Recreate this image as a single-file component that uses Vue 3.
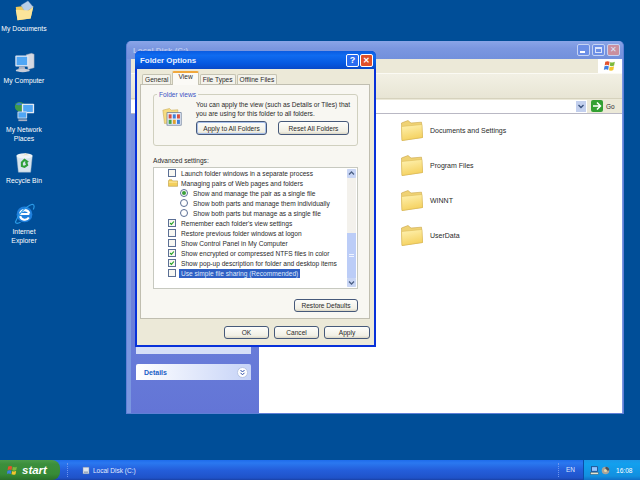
<template>
  <div class="desktop">
    <div v-for="icon in desktopIcons" :key="icon.label" class="desk-icon" :style="{ top: icon.top + 'px' }">
      <svg class="desk-glyph" viewBox="0 0 24 24" v-html="icon.svg"></svg>
      <span>{{ icon.label }}</span>
    </div>

    <!-- explorer window behind the dialog -->
    <div class="explorer">
      <div class="ex-title">
        <span class="ex-title-text">Local Disk (C:)</span>
        <div class="ex-caps">
          <span class="ex-cap"><i class="cap-min"></i></span>
          <span class="ex-cap"><i class="cap-max"></i></span>
          <span class="ex-cap ex-cap-close">✕</span>
        </div>
      </div>
      <div class="ex-inner">
        <div class="ex-menu">
          <svg class="ex-flag" viewBox="0 0 14 14" v-html="flagSvg"></svg>
        </div>
        <div class="ex-toolbar"></div>
        <div class="ex-address">
          <div class="ex-addr-box"><span class="combo-arrow"><svg viewBox="0 0 10 11"><path d="M2.500 4 5 6.500 7.500 4" fill="none" stroke="#38507c" stroke-width="1.300"/></svg></span></div>
          <span class="go-btn"><svg viewBox="0 0 12 12"><path d="M2 6h7M6 2.500 9.500 6 6 9.500" fill="none" stroke="#fff" stroke-width="1.500"/></svg></span>
          <span class="go-text">Go</span>
        </div>
        <div class="ex-body">
          <div class="ex-side">
            <div class="side-box"></div>
            <div class="side-head">
              <span>Details</span>
              <span class="chev"><svg viewBox="0 0 9 9"><path d="M2.500 2 4.500 4l2-2M2.500 4.800l2 2 2-2" fill="none" stroke="#2a4ba8" stroke-width="1"/></svg></span>
            </div>
          </div>
          <div class="ex-files">
            <div v-for="name in folders" :key="name" class="file-row">
              <svg class="folder" viewBox="0 0 24 24">
                <defs>
                  <linearGradient id="folderFront" x1="0" y1="0" x2="0.300" y2="1">
                    <stop offset="0" stop-color="#fff3b4"/>
                    <stop offset="1" stop-color="#f5d261"/>
                  </linearGradient>
                </defs>
                <path d="M1.500 5 8 2.500l3 2.500 10.500-.8 1 15.300-20.500 3z" fill="#efd274" stroke="#c9a545" stroke-width=".6"/>
                <path d="M1.500 8.500 22 6.500l.5 13-20.500 3z" fill="url(#folderFront)" stroke="#d8b750" stroke-width=".5"/>
              </svg>
              <span>{{ name }}</span>
            </div>
          </div>
        </div>
      </div>
    </div>

    <!-- Folder Options dialog -->
    <div class="dialog">
      <div class="dlg-title">
        <span>Folder Options</span>
        <div class="dlg-caps">
          <span class="dlg-cap dlg-help">?</span>
          <span class="dlg-cap dlg-close">✕</span>
        </div>
      </div>
      <div class="dlg-body">
        <div class="tabs">
          <span v-for="t in tabs" :key="t" class="tab" :class="{ active: t === 'View' }">{{ t }}</span>
        </div>
        <div class="panel">
          <div class="group">
            <span class="legend">Folder views</span>
            <svg class="views-icon" viewBox="0 0 24 24">
              <path d="M1 5l8-2 2 2 8-.5V19L3 21z" fill="#f6dc80" stroke="#c2a24a" stroke-width=".6"/>
              <rect x="6" y="8" width="17" height="15" fill="#e8eef8" stroke="#5a6f90" stroke-width=".8"/>
              <rect x="8" y="10" width="3.500" height="5" fill="#d9503f"/><rect x="13" y="10" width="3.500" height="5" fill="#3f7fd9"/><rect x="18" y="10" width="3.500" height="5" fill="#d9503f"/>
              <rect x="8" y="16.500" width="3.500" height="5" fill="#47a447"/><rect x="13" y="16.500" width="3.500" height="5" fill="#e0a030"/><rect x="18" y="16.500" width="3.500" height="5" fill="#3f7fd9"/>
            </svg>
            <div class="group-main">
              <p>You can apply the view (such as Details or Tiles) that<br>you are using for this folder to all folders.</p>
              <div class="group-btns">
                <button class="btn btn-default wide">Apply to All Folders</button>
                <button class="btn wide">Reset All Folders</button>
              </div>
            </div>
          </div>

          <div class="adv-label">Advanced settings:</div>
          <div class="list">
            <div class="list-rows">
              <div v-for="row in rows" :key="row.text" class="row" :class="'row-' + row.type">
                <span v-if="row.type === 'check'" class="check">
                  <svg v-if="row.on" viewBox="0 0 8 8"><path d="M1.500 4 3.200 5.800 6.500 2" fill="none" stroke="#21a121" stroke-width="1.500"/></svg>
                </span>
                <span v-else-if="row.type === 'radio'" class="radio"><i v-if="row.on"></i></span>
                <svg v-else class="folder-mini" viewBox="0 0 12 9"><path d="M.5 2 1.500.6h3l1 1.400h6v6.500H.5z" fill="#f3cf5c" stroke="#a8882e" stroke-width=".6"/><path d="M1 3.400h10" stroke="#fff2b8" stroke-width="1"/></svg>
                <span class="row-text" :class="{ selected: row.selected }">{{ row.text }}</span>
              </div>
            </div>
            <div class="scroll">
              <span class="sb-btn"><svg viewBox="0 0 9 9"><path d="M2 5.500 4.500 3 7 5.500" fill="none" stroke="#4d6185" stroke-width="1.300"/></svg></span>
              <div class="sb-track"><div class="sb-thumb"><i></i></div></div>
              <span class="sb-btn"><svg viewBox="0 0 9 9"><path d="M2 3.500 4.500 6 7 3.500" fill="none" stroke="#4d6185" stroke-width="1.300"/></svg></span>
            </div>
          </div>
          <div class="restore-row">
            <button class="btn restore">Restore Defaults</button>
          </div>
        </div>
        <div class="dlg-actions">
          <button class="btn action">OK</button>
          <button class="btn action">Cancel</button>
          <button class="btn action">Apply</button>
        </div>
      </div>
    </div>

    <!-- taskbar -->
    <div class="taskbar">
      <div class="start">
        <svg class="start-flag" viewBox="0 0 14 14" v-html="flagSvg"></svg>
        <span>start</span>
      </div>
      <div class="task-grip"></div>
      <div class="task-item">
        <svg viewBox="0 0 12 12"><rect x="1.500" y="1" width="9" height="10" fill="#dfe6ee" stroke="#7f8ea8" stroke-width=".7"/><rect x="3" y="7.500" width="6" height="2" fill="#8fa0b8"/></svg>
        <span>Local Disk (C:)</span>
      </div>
      <div class="lang">EN</div>
      <div class="tray">
        <svg viewBox="0 0 12 12"><rect x="2" y="1" width="8" height="6" fill="#8fc4ff" stroke="#1a2f6a" stroke-width=".9"/><rect x="1" y="8.500" width="10" height="2.500" fill="#e8e4d0" stroke="#4a4a4a" stroke-width=".5"/></svg>
        <svg viewBox="0 0 12 12"><circle cx="6" cy="6" r="5" fill="#a9a49a"/><circle cx="6" cy="6" r="2" fill="#e7d9a8"/><path d="M6 1A5 5 0 0 1 11 6H8a2 2 0 0 0-2-2z" fill="#4a4f5a"/></svg>
        <span>16:08</span>
      </div>
    </div>
  </div>
</template>

<script setup>
const flagSvg = `
  <path d="M1.500 2c1.800-.9 3.500-.9 5 0L5.800 6.300c-1.600-.9-3.300-.9-5 0z" fill="#e4532d"/>
  <path d="M7.400 2.300c1.700.9 3.400.9 5.200-.2l-.8 4.300c-1.700 1-3.500 1-5.100.2z" fill="#7db93c"/>
  <path d="M.6 7.300c1.700-.9 3.400-.9 5 0l-.8 4.300c-1.600-.9-3.300-.9-5 0z" fill="#3f7ee0"/>
  <path d="M6.600 7.600c1.700.9 3.400.9 5.100-.2l-.8 4.300c-1.700 1-3.500 1-5.100.2z" fill="#f5c52e"/>`

const computerSvg = `
  <path d="M14 3l6-1.500 3 1V18l-7 2z" fill="#d4d8e2" stroke="#8f97ab" stroke-width=".5"/>
  <rect x="1.500" y="4" width="15" height="12.500" rx="1" fill="#dfe6f2"/>
  <rect x="3" y="5.500" width="12" height="9.500" fill="#4fa6f5"/>
  <path d="M6 16.500h6l1 3H5z" fill="#aab2c4"/>
  <ellipse cx="10" cy="21" rx="8" ry="2" fill="#c7ccd8"/>`

const desktopIcons = [
  {
    label: 'My Documents',
    top: 0,
    svg: `<path d="M2 8l7-1 2 2 11-2-3 14L4 23z" fill="#eec95a"/>
      <path d="M8 6l8-5 6 7-9 6z" fill="#b9cfe8" stroke="#8fa9cc" stroke-width=".4"/>
      <path d="M2 11l15 1 5-4-3 13-15 2z" fill="#fbe59a"/>`,
  },
  { label: 'My Computer', top: 52, svg: computerSvg },
  {
    label: 'My Network Places',
    top: 101,
    svg: `<circle cx="6.500" cy="6.500" r="5.500" fill="#3f9a4b"/><path d="M2 4c3-3 6-2 8 0-3 1-6 1-8 0z" fill="#3b7fd9"/>
      <rect x="9" y="3" width="14" height="11" rx="1" fill="#e6eaf2"/><rect x="10.500" y="4.500" width="11" height="8" fill="#4fa6f5"/>
      <rect x="4" y="12" width="11" height="8" rx="1" fill="#dce1ea"/><rect x="5" y="13" width="9" height="6" fill="#4fa6f5"/>
      <path d="M5 21h10v2H5z" fill="#aab2c4"/>`,
  },
  {
    label: 'Recycle Bin',
    top: 152,
    svg: `<path d="M3 4h18l-2 19H5z" fill="#d6e4ee" stroke="#9fb5c8" stroke-width=".5"/>
      <ellipse cx="12" cy="4.500" rx="9" ry="3" fill="#eef4f8"/>
      <path d="M7 3l4 1 2-3 4 3" fill="#e7e2c8"/>
      <path d="M9 12l3-3 3 2-1 1 1 3-3 2-3-1z" fill="none" stroke="#2fa03a" stroke-width="2.400"/>`,
  },
  {
    label: 'Internet Explorer',
    top: 203,
    svg: `<circle cx="12" cy="13" r="9" fill="#1f7fdc"/>
      <path d="M6.500 12.500h11M7 12a5.500 5.500 0 0 1 10.500 0M7 15a5.500 5.500 0 0 0 10 1.500" fill="none" stroke="#fff" stroke-width="2.400"/>
      <path d="M1.500 22C4 14 13 4 21 1.500c3 0 2 4 1 6M1.500 22c1 2 4 1 6 0" fill="none" stroke="#2b9ce8" stroke-width="1.300"/>`,
  },
]

const folders = ['Documents and Settings', 'Program Files', 'WINNT', 'UserData']
const tabs = ['General', 'View', 'File Types', 'Offline Files']

const rows = [
  { type: 'check', text: 'Launch folder windows in a separate process' },
  { type: 'folder', text: 'Managing pairs of Web pages and folders' },
  { type: 'radio', on: true, text: 'Show and manage the pair as a single file' },
  { type: 'radio', text: 'Show both parts and manage them individually' },
  { type: 'radio', text: 'Show both parts but manage as a single file' },
  { type: 'check', on: true, text: "Remember each folder's view settings" },
  { type: 'check', text: 'Restore previous folder windows at logon' },
  { type: 'check', text: 'Show Control Panel in My Computer' },
  { type: 'check', on: true, text: 'Show encrypted or compressed NTFS files in color' },
  { type: 'check', on: true, text: 'Show pop-up description for folder and desktop items' },
  { type: 'check', selected: true, text: 'Use simple file sharing (Recommended)' },
]
</script>

<style>
html, body { margin: 0; padding: 0; overflow: hidden; }
</style>

<style scoped>
.desktop {
  position: relative;
  width: 640px;
  height: 480px;
  overflow: hidden;
  background: #004e98;
  font-family: "Liberation Sans", Arial, sans-serif;
  font-size: 6.6px;
  color: #2a2a2a;
}

.desk-icon {
  position: absolute;
  left: 0;
  width: 48px;
  display: flex;
  flex-direction: column;
  align-items: center;
  color: #fff;
  text-align: center;
  line-height: 8.5px;
  font-size: 6.8px;
}
.desk-glyph { width: 21px; height: 21px; margin-bottom: 4px; }

/* explorer */
.explorer {
  position: absolute;
  left: 126px;
  top: 41px;
  width: 498px;
  height: 373px;
  box-sizing: border-box;
  background: #7b97e0;
  border: 1px solid #5f7fd6;
  border-top: 0;
  border-radius: 5px 5px 0 0;
  display: flex;
  flex-direction: column;
}
.ex-title {
  height: 18px;
  display: flex;
  align-items: center;
  justify-content: space-between;
  padding: 0 3px 0 6px;
  background: linear-gradient(#8aa5e8, #7b97e0 40%, #7290dc);
  border-radius: 5px 5px 0 0;
}
.ex-title-text { color: #b9c8ef; font-weight: 700; font-size: 7.9px; }
.ex-caps { display: flex; gap: 2px; }
.ex-cap {
  width: 13px;
  height: 12px;
  box-sizing: border-box;
  border: 1px solid #c6d3f3;
  border-radius: 2px;
  background: #6c8fe6;
  color: #dbe4fa;
  font-size: 8px;
  line-height: 10px;
  text-align: center;
  position: relative;
}
.ex-cap-close { background: #c98f9f; }
.cap-min { position: absolute; left: 2px; bottom: 2px; width: 5px; height: 2px; background: #fff; }
.cap-max { position: absolute; left: 2px; top: 2px; width: 7px; height: 6px; box-sizing: border-box; border: 1px solid #dbe4fa; border-top-width: 2px; }
.ex-inner { flex: 1; margin: 0 1px 0 4px; display: flex; flex-direction: column; min-height: 0; }
.ex-menu {
  height: 14px;
  background: #ece9d8;
  border-bottom: 1px solid #fbfaf4;
  display: flex;
  justify-content: flex-end;
}
.ex-flag { width: 24px; height: 14px; background: #fff; padding: 1px 5px; box-sizing: border-box; }
.ex-toolbar { height: 24px; background: linear-gradient(#f2f0e4, #e8e5d4); border-bottom: 1px solid #d6d2bd; }
.ex-address {
  height: 14px;
  background: #ece9d8;
  display: flex;
  align-items: center;
  border-bottom: 1px solid #b9b8c4;
}
.ex-addr-box {
  flex: 1;
  height: 13px;
  background: #fff;
  display: flex;
  justify-content: flex-end;
  align-items: center;
  padding-right: 1px;
}
.combo-arrow { width: 10px; height: 11px; background: #c3d0ee; display: block; }
.combo-arrow svg { width: 10px; height: 11px; display: block; }
.go-btn { width: 12px; height: 12px; background: #32a032; border-radius: 2px; margin: 0 3px 0 4px; }
.go-btn svg { width: 12px; height: 12px; display: block; }
.go-text { width: 16px; font-size: 6.5px; color: #333; }
.ex-body { flex: 1; display: flex; min-height: 0; }
.ex-side {
  width: 128px;
  background: linear-gradient(#7a94e2, #6375d6);
  box-sizing: border-box;
  display: flex;
  flex-direction: column;
  justify-content: flex-end;
  padding: 0 0 33px 5px;
}
.side-box { height: 14px; margin-bottom: 10px; width: 115px; background: #d6dff7; }
.side-head {
  height: 16px;
  width: 115px;
  box-sizing: border-box;
  padding: 0 3px 0 8px;
  display: flex;
  align-items: center;
  justify-content: space-between;
  background: linear-gradient(90deg, #fff, #c6d3f7);
  border-radius: 2px 2px 0 0;
  color: #215dc6;
  font-weight: 700;
  font-size: 7px;
}
.chev {
  width: 11px;
  height: 11px;
  border-radius: 50%;
  background: #fff;
  border: 1px solid #b7c4e4;
  box-sizing: border-box;
}
.chev svg { width: 9px; height: 9px; display: block; }
.ex-files {
  flex: 1;
  background: #fff;
  padding: 4px 0 0 141px;
  display: flex;
  flex-direction: column;
  gap: 11px;
  color: #2a2a2a;
  font-size: 7px;
}
.file-row { display: flex; align-items: center; gap: 6px; height: 24px; }
.folder { width: 24px; height: 24px; flex: none; }

/* dialog */
.dialog {
  position: absolute;
  left: 135px;
  top: 51px;
  width: 241px;
  height: 296px;
  box-sizing: border-box;
  background: #0831d9;
  border: 2px solid #0831d9;
  border-top: 0;
  border-radius: 5px 5px 0 0;
  display: flex;
  flex-direction: column;
}
.dlg-title {
  height: 19px;
  margin: 0 -2px;
  padding: 0 3px 0 5px;
  display: flex;
  align-items: center;
  justify-content: space-between;
  background: linear-gradient(#0a5be0, #0f6bf0 25%, #0558e0 70%, #0848c8);
  border-radius: 5px 5px 0 0;
  color: #e8f0ff;
  font-weight: 700;
  font-size: 7.9px;
}
.dlg-caps { display: flex; gap: 1px; }
.dlg-cap {
  width: 13px;
  height: 13px;
  box-sizing: border-box;
  border: 1px solid #fff;
  border-radius: 2px;
  color: #fff;
  font-size: 9px;
  line-height: 11px;
  text-align: center;
}
.dlg-help { background: #2a6cf0; }
.dlg-close { background: #e0502a; font-size: 8px; }
.dlg-body {
  flex: 1;
  background: #ece9d8;
  padding: 2px 4px 6px 3px;
  display: flex;
  flex-direction: column;
}
.tabs { display: flex; align-items: flex-end; height: 13px; padding-left: 2px; gap: 1px; position: relative; z-index: 1; }
.tab {
  padding: 0 2px;
  height: 10px;
  line-height: 9px;
  background: #f4f3ec;
  border: 1px solid #c5c3b2;
  border-bottom: 0;
  border-radius: 2px 2px 0 0;
  box-sizing: border-box;
  font-size: 6.6px;
}
.tab.active {
  height: 14px;
  margin: 0 0 -1px 0;
  padding: 0 5px;
  background: #fbfaf6;
  border-top: 2px solid #f1a83c;
  line-height: 8px;
}
.panel {
  height: 235px;
  box-sizing: border-box;
  background: #f8f7f2;
  border: 1px solid #c0beb0;
  padding: 9px 11px 0 12px;
  display: flex;
  flex-direction: column;
}
.group {
  position: relative;
  height: 52px;
  flex: none;
  box-sizing: border-box;
  border: 1px solid #d0d0bf;
  border-radius: 3px;
  padding: 0 0 0 8px;
  display: flex;
  gap: 14px;
}
.legend {
  position: absolute;
  left: 3px;
  top: -5px;
  padding: 0 2px;
  background: #f8f7f2;
  color: #3a53c4;
  font-size: 6.6px;
  line-height: 9px;
}
.views-icon { width: 20px; height: 20px; margin-top: 11px; flex: none; }
.group-main p { margin: 5px 0 0; line-height: 9px; white-space: nowrap; }
.group-btns { display: flex; gap: 11px; margin-top: 3px; }
.btn {
  font-family: inherit;
  font-size: 6.6px;
  color: #2a2a2a;
  padding: 0;
  background: linear-gradient(#fdfdfb, #f1efe4 80%, #d9d5c4);
  border: 1px solid #46597a;
  border-radius: 3px;
  box-sizing: border-box;
  white-space: nowrap;
}
.btn-default { box-shadow: inset 0 0 0 1px #a9c0ea; }
.wide { width: 71px; height: 14px; line-height: 11px; }
.adv-label { margin-top: 10px; line-height: 10px; }
.list {
  margin-top: 1px;
  height: 122px;
  flex: none;
  box-sizing: border-box;
  border: 1px solid #c7c9c0;
  background: #fff;
  display: flex;
}
.list-rows { flex: 1; }
.row { height: 10px; display: flex; align-items: center; padding-left: 14px; white-space: nowrap; }
.row-radio { padding-left: 26px; }
.check {
  width: 8px;
  height: 8px;
  box-sizing: border-box;
  border: 1px solid #5b6f95;
  background: #f7f7f2;
  margin-right: 4px;
  flex: none;
}
.check svg { width: 6px; height: 6px; display: block; }
.radio {
  width: 8px;
  height: 8px;
  box-sizing: border-box;
  border: 1px solid #5b6f95;
  border-radius: 50%;
  background: #fff;
  margin-right: 4px;
  display: flex;
  align-items: center;
  justify-content: center;
  flex: none;
}
.radio i { width: 4px; height: 4px; border-radius: 50%; background: #3aa03a; display: block; }
.folder-mini { width: 10px; height: 8px; margin-right: 2px; flex: none; }
.row-text { line-height: 9px; padding: 0 1px; }
.row-text.selected { background: #2f60c4; color: #dfe8fb; padding: 0 2px; margin-left: -1px; }
.scroll { width: 9px; margin: 1px 1px 1px 0; display: flex; flex-direction: column; background: #f3f1ec; }
.sb-btn { height: 9px; background: #c9d6f5; display: block; border-radius: 1px; flex: none; }
.sb-btn svg { width: 9px; height: 9px; display: block; }
.sb-track { flex: 1; display: flex; flex-direction: column; justify-content: flex-end; }
.sb-thumb { height: 45px; background: #bccdf7; display: flex; align-items: center; justify-content: center; }
.sb-thumb i { width: 5px; height: 3px; border-top: 1px solid #eef3ff; border-bottom: 1px solid #eef3ff; display: block; box-sizing: border-box; }
.restore-row { display: flex; justify-content: flex-end; margin-top: 10px; }
.restore { width: 64px; height: 13px; line-height: 10px; }
.dlg-actions { margin-top: 7px; display: flex; justify-content: flex-end; gap: 5px; }
.action { width: 45px; height: 13px; line-height: 10px; }
.action:last-child { width: 46px; }

/* taskbar */
.taskbar {
  position: absolute;
  left: 0;
  right: 0;
  bottom: 0;
  height: 20px;
  display: flex;
  align-items: center;
  background: linear-gradient(#1f6cec, #2a78f0 15%, #245edb 50%, #1f52c8 90%, #1941a5);
  color: #fff;
}
.start {
  width: 60px;
  height: 20px;
  box-sizing: border-box;
  padding-left: 7px;
  display: flex;
  align-items: center;
  gap: 4px;
  background: linear-gradient(#4a9b4a, #3c8f3c 20%, #378b37 70%, #2a6f2a);
  border-radius: 0 8px 8px 0;
  font-style: italic;
  font-weight: 700;
  font-size: 11.5px;
  color: #fff;
}
.start-flag { width: 11px; height: 11px; }
.task-grip { width: 1px; height: 14px; margin-left: 7px; border-left: 1px dotted #6c95ee; }
.task-item {
  margin-left: 13px;
  flex: 1;
  display: flex;
  align-items: center;
  gap: 3px;
  font-size: 6.5px;
  color: #e2ebfb;
}
.task-item svg { width: 8px; height: 9px; }
.lang {
  width: 25px;
  height: 14px;
  line-height: 14px;
  font-size: 6.5px;
  color: #dce6fb;
  padding-left: 7px;
  box-sizing: border-box;
  border-left: 1px dotted #6c95ee;
}
.tray {
  width: 57px;
  height: 20px;
  box-sizing: border-box;
  padding-left: 6px;
  display: flex;
  align-items: center;
  gap: 2px;
  background: linear-gradient(#1b97e8, #12a0ee 20%, #1290e0 80%, #1070c8);
  border-left: 1px solid #0a4ea8;
  font-size: 6.6px;
}
.tray svg { width: 9px; height: 9px; flex: none; }
.tray span { margin-left: 4px; }
</style>
